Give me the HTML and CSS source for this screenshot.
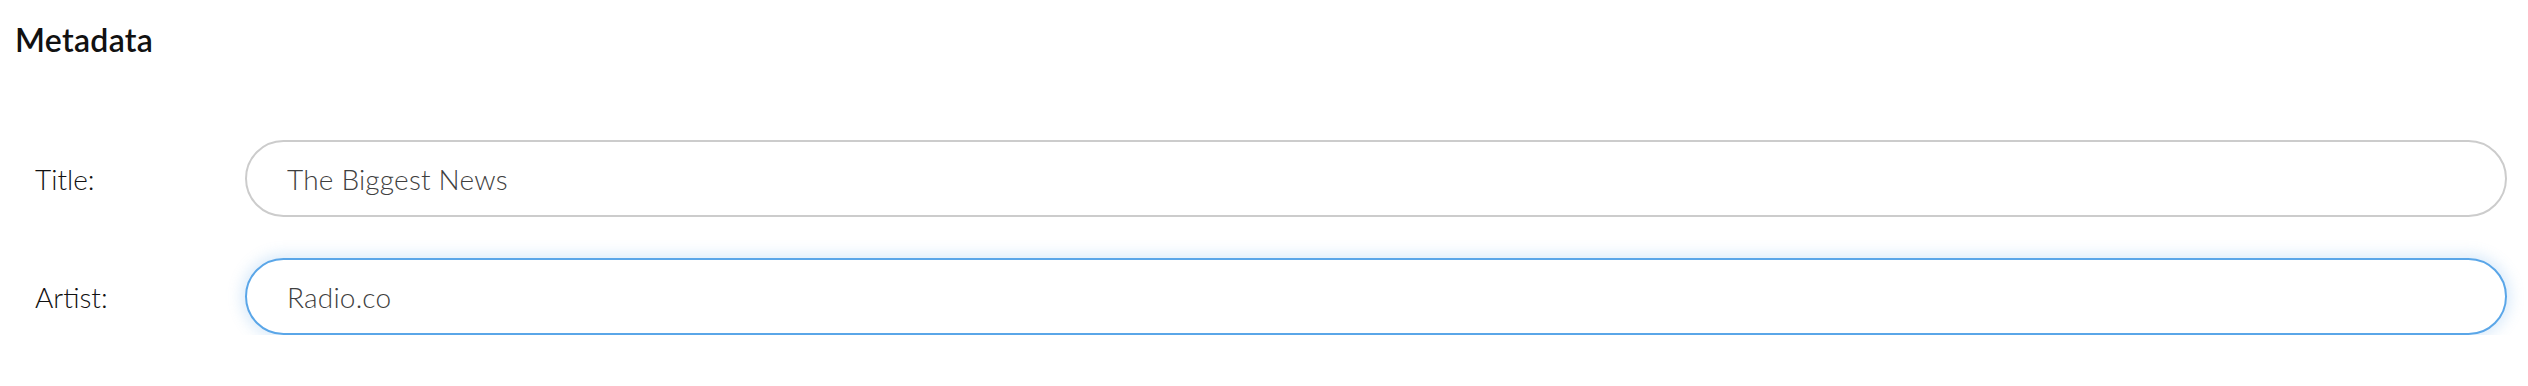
FILE: index.html
```html
<!DOCTYPE html>
<html lang="en">
<head>
<meta charset="utf-8">
<title>Metadata</title>
<link rel="stylesheet" href="styles.css">
</head>
<body>
<section class="metadata">
  <h2 class="section-title">Metadata</h2>
  <div class="fields">
    <div class="field-row">
      <label class="field-label" for="title">Title:</label>
      <input class="field-input" id="title" type="text" value="The Biggest News">
    </div>
    <div class="field-row">
      <label class="field-label" for="artist">Artist:</label>
      <input class="field-input is-focused" id="artist" type="text" value="Radio.co">
    </div>
  </div>
</section>
</body>
</html>
```

FILE: styles.css
```css
html, body {
  margin: 0;
  padding: 0;
  background: #ffffff;
}

body {
  font-family: "Lato", "Liberation Sans", sans-serif;
  color: #1a1a1a;
}

.metadata {
  padding: 20px 21px 0 15px;
}

.section-title {
  margin: 0;
  font-size: 32px;
  font-weight: 600;
  line-height: 40px;
  letter-spacing: 0.3px;
  color: #111111;
}

.fields {
  margin-top: 80px;
  padding-left: 20px;
  display: flex;
  flex-direction: column;
  gap: 41px;
}

.field-row {
  display: grid;
  grid-template-columns: 210px 1fr;
  align-items: center;
}

.field-label {
  font-size: 28px;
  font-weight: 300;
  color: #111111;
}

.field-input {
  box-sizing: border-box;
  height: 77px;
  width: 100%;
  border: 2px solid #cccccc;
  border-radius: 39px;
  padding: 0 40px;
  font-family: inherit;
  font-size: 28px;
  font-weight: 300;
  letter-spacing: 0.2px;
  color: #3f3f3f;
  background: #ffffff;
  outline: none;
}

.field-input.is-focused {
  border-color: #5aa6e8;
  box-shadow: 0 0 14px 4px rgba(90, 166, 232, 0.22);
}
```
